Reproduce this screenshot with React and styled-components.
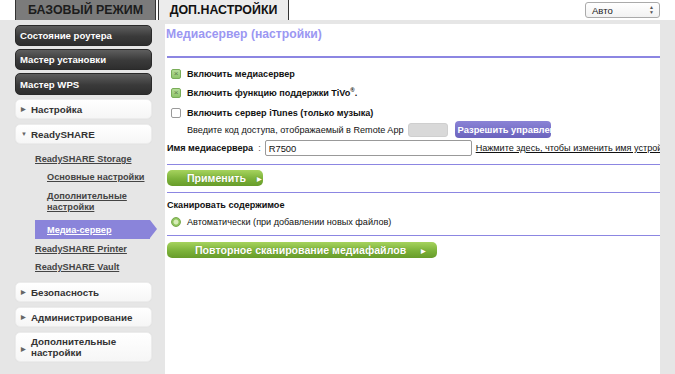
import React from "react";
import styled, { createGlobalStyle } from "styled-components";

const Global = createGlobalStyle`
  html, body { margin: 0; padding: 0; background: #fff; }
  body { font-family: "Liberation Sans", Arial, sans-serif; }
  #root { width: 675px; height: 374px; overflow: hidden; }
`;

const Page = styled.div`
  width: 675px;
  height: 374px;
  display: flex;
  flex-direction: column;
  overflow: hidden;
`;

const TopBar = styled.div`
  height: 20px;
  display: flex;
  align-items: stretch;
  padding-left: 15px;
  background: #fff;
`;

const Tab = styled.div`
  height: 20px;
  box-sizing: border-box;
  display: flex;
  align-items: center;
  justify-content: center;
  width: ${(p) => p.$w}px;
  margin-right: ${(p) => p.$mr || 0}px;
  background: ${(p) => (p.$active ? "#ececec" : "#7b7b7b")};
  color: ${(p) => (p.$active ? "#111" : "#1c1c1c")};
  border: 1px solid #333;
  border-top: none;
  border-bottom: none;
  font-weight: bold;
  font-size: 12.4px;
`;

const Select = styled.div`
  margin-left: auto;
  margin-right: 15px;
  margin-top: 2px;
  width: 75px;
  height: 16px;
  box-sizing: border-box;
  border: 1px solid #aaa;
  border-radius: 3px;
  background: linear-gradient(#fff, #f2f2f2);
  display: flex;
  align-items: center;
  justify-content: space-between;
  padding: 0 5px 0 6px;
  font-size: 9.5px;
  color: #222;
`;

const Arrows = styled.span`
  display: flex;
  flex-direction: column;
  align-items: center;
  font-size: 5px;
  line-height: 5px;
  color: #555;
`;

const Body = styled.div`
  flex: 1;
  background: #e6e6e6;
  display: flex;
  padding-top: 4px;
  padding-left: 15px;
  min-height: 0;
`;

const Sidebar = styled.div`
  width: 137px;
  display: flex;
  flex-direction: column;
  padding-top: 1px;
`;

const DarkBtn = styled.div`
  height: ${(p) => p.$h}px;
  box-sizing: border-box;
  margin-bottom: ${(p) => p.$mb}px;
  border-radius: 5px;
  background: linear-gradient(#5e5e5e, #3a3a3a 55%, #2e2e2e);
  border: 1px solid #2a2a2a;
  color: #fff;
  font-weight: bold;
  font-size: 9.6px;
  display: flex;
  align-items: center;
  padding-left: 4px;
`;

const LightBtn = styled.div`
  height: ${(p) => p.$h || 20}px;
  box-sizing: border-box;
  margin-bottom: ${(p) => p.$mb || 0}px;
  border-radius: 5px;
  background: linear-gradient(#fff, #f6f6f6);
  border: 1px solid #ececec;
  box-shadow: 0 0 1px rgba(0,0,0,0.08);
  color: #333;
  font-weight: bold;
  font-size: 9.8px;
  line-height: 11px;
  display: flex;
  align-items: center;
  padding-left: 5px;
`;

const Tri = styled.span`
  font-size: 6px;
  color: #666;
  width: 10px;
  flex-shrink: 0;
  margin-top: ${(p) => p.$mt || 0}px;
`;

const SubList = styled.div`
  display: flex;
  flex-direction: column;
  padding-top: 10px;
  padding-bottom: 9px;
`;

const SubLink = styled.a`
  display: block;
  color: #444;
  font-weight: bold;
  font-size: 9.2px;
  line-height: 11px;
  text-decoration: underline;
  padding-left: ${(p) => p.$indent}px;
  margin-bottom: ${(p) => p.$mb}px;
  width: ${(p) => p.$w || "auto"};
`;

const ActiveLink = styled.div`
  position: relative;
  margin-left: 20px;
  width: 115px;
  height: 19px;
  background: #8a84da;
  display: flex;
  align-items: center;
  padding-left: 12px;
  box-sizing: border-box;
  margin-bottom: 5px;
  color: #fff;
  font-weight: bold;
  font-size: 9.2px;
  text-decoration: underline;
  &::after {
    content: "";
    position: absolute;
    right: -7px;
    top: 0;
    border-left: 7px solid #8a84da;
    border-top: 9.5px solid transparent;
    border-bottom: 9.5px solid transparent;
  }
`;

const Main = styled.div`
  margin-left: 13px;
  width: 495px;
  background: #fff;
  overflow: hidden;
  display: flex;
  flex-direction: column;
  padding-left: 2px;
  box-sizing: border-box;
`;

const Title = styled.div`
  color: #9b97f2;
  font-weight: bold;
  font-size: 12.2px;
  margin-top: 3px;
  height: 15px;
  line-height: 15px;
  margin-left: -1px;
`;

const Rule = styled.div`
  flex-shrink: 0;
  height: ${(p) => p.$t || 1}px;
  background: #8c86e2;
  margin-top: ${(p) => p.$mt}px;
`;

const Row = styled.div`
  display: flex;
  align-items: center;
  flex-shrink: 0;
  height: ${(p) => p.$h || 14}px;
  margin-top: ${(p) => p.$mt}px;
  padding-left: ${(p) => p.$pl || 0}px;
  white-space: nowrap;
  font-size: 9.1px;
  color: #111;
  & > * { flex-shrink: 0; }
`;

const Box = styled.span`
  width: 10px;
  height: 10px;
  box-sizing: border-box;
  margin-left: 4px;
  margin-right: 6px;
  border-radius: 2px;
  display: flex;
  align-items: center;
  justify-content: center;
  font-size: 8px;
  line-height: 8px;
  ${(p) =>
    p.$checked
      ? "background: linear-gradient(#b5dc98, #8fc56b); border: 1px solid #79ad58; color: #5d7d48;"
      : "background: #fff; border: 1px solid #9a9a9a;"}
`;

const Radio = styled.span`
  width: 10px;
  height: 10px;
  border-radius: 50%;
  box-sizing: border-box;
  margin-left: 4px;
  margin-right: 6px;
  background: radial-gradient(circle, #d7ecb8 0 2px, #8fc45e 3px);
  border: 1px solid #7aa94f;
`;

const Bold = styled.span`
  font-weight: bold;
  font-size: 9.1px;
`;

const Sup = styled.sup`
  font-size: 6px;
  line-height: 0;
`;

const GreyInput = styled.span`
  display: inline-block;
  width: 40px;
  height: 14px;
  background: #d9d9d9;
  border: 1px solid #cfcfcf;
  border-radius: 3px;
  margin-left: 4px;
  box-sizing: border-box;
`;

const PurpleBtn = styled.span`
  display: inline-flex;
  align-items: center;
  height: 17px;
  width: 96px;
  overflow: hidden;
  margin-left: 7px;
  border-radius: 4px;
  background: linear-gradient(#8a83d6, #6b63bd);
  color: #fff;
  font-weight: bold;
  font-size: 9.4px;
  padding-left: 3px;
  box-sizing: border-box;
`;

const TextInput = styled.span`
  display: inline-flex;
  align-items: center;
  width: 207px;
  height: 16px;
  box-sizing: border-box;
  border: 1px solid #999;
  border-radius: 2px;
  padding-left: 3px;
  font-size: 9.4px;
  margin-left: 4px;
  color: #111;
`;

const Colon = styled.span`
  margin-left: 5px;
  color: #555;
`;

const Link = styled.a`
  margin-left: 4px;
  color: #111;
  text-decoration: underline;
  font-size: 9.1px;
`;

const GreenBtn = styled.div`
  flex-shrink: 0;
  width: ${(p) => p.$w}px;
  height: 16px;
  box-sizing: border-box;
  margin-top: ${(p) => p.$mt}px;
  border-radius: 5px;
  background: linear-gradient(#a6d35e, #7cb23a 55%, #679c2a);
  color: #fff;
  font-weight: bold;
  font-size: 10.6px;
  display: flex;
  align-items: center;
  padding-left: ${(p) => p.$pl}px;
  gap: ${(p) => p.$gap}px;
  text-shadow: 0 0 1px rgba(60, 90, 20, 0.5);
`;

const SmallTri = styled.span`
  font-size: 6px;
`;

export default function App() {
  return (
    <Page>
      <Global />
      <TopBar>
        <Tab $w={141} $mr={2}>БАЗОВЫЙ РЕЖИМ</Tab>
        <Tab $w={131} $active>ДОП.НАСТРОЙКИ</Tab>
        <Select>
          <span>Авто</span>
          <Arrows>
            <span>▲</span>
            <span>▼</span>
          </Arrows>
        </Select>
      </TopBar>
      <Body>
        <Sidebar>
          <DarkBtn $h={21} $mb={3}>Состояние роутера</DarkBtn>
          <DarkBtn $h={21} $mb={3}>Мастер установки</DarkBtn>
          <DarkBtn $h={22} $mb={4}>Мастер WPS</DarkBtn>
          <LightBtn $mb={5}>
            <Tri>▶</Tri>Настройка
          </LightBtn>
          <LightBtn>
            <Tri>▼</Tri>ReadySHARE
          </LightBtn>
          <SubList>
            <SubLink $indent={20} $mb={7}>ReadySHARE Storage</SubLink>
            <SubLink $indent={32} $mb={8}>Основные настройки</SubLink>
            <SubLink $indent={32} $mb={7} $w="90px">
              Дополнительные настройки
            </SubLink>
            <ActiveLink>Медиа-сервер</ActiveLink>
            <SubLink $indent={20} $mb={7}>ReadySHARE Printer</SubLink>
            <SubLink $indent={20} $mb={0}>ReadySHARE Vault</SubLink>
          </SubList>
          <LightBtn $mb={5}>
            <Tri>▶</Tri>Безопасность
          </LightBtn>
          <LightBtn $mb={5}>
            <Tri>▶</Tri>Администрирование
          </LightBtn>
          <LightBtn $h={30}>
            <Tri $mt={4}>▶</Tri>
            <span>
              Дополнительные
              <br />
              настройки
            </span>
          </LightBtn>
        </Sidebar>
        <Main>
          <Title>Медиасервер (настройки)</Title>
          <Rule $t={2} $mt={14} />
          <Row $mt={9}>
            <Box $checked>×</Box>
            <Bold>Включить медиасервер</Bold>
          </Row>
          <Row $mt={5}>
            <Box $checked>×</Box>
            <Bold>
              Включить функцию поддержки TiVo<Sup>®</Sup>.
            </Bold>
          </Row>
          <Row $mt={6}>
            <Box />
            <Bold>Включить сервер iTunes (только музыка)</Bold>
          </Row>
          <Row $mt={1} $h={17} $pl={20}>
            Введите код доступа, отображаемый в Remote App
            <GreyInput />
            <PurpleBtn>Разрешить управление</PurpleBtn>
          </Row>
          <Row $mt={2} $h={16}>
            <Bold>Имя медиасервера</Bold>
            <Colon>:</Colon>
            <TextInput>R7500</TextInput>
            <Link>Нажмите здесь, чтобы изменить имя устройства</Link>
          </Row>
          <Rule $mt={8} />
          <GreenBtn $w={96} $mt={5} $pl={20} $gap={11}>
            Применить <SmallTri>▶</SmallTri>
          </GreenBtn>
          <Rule $mt={6} />
          <Row $mt={5}>
            <Bold>Сканировать содержимое</Bold>
          </Row>
          <Row $mt={3}>
            <Radio />
            Автоматически (при добавлении новых файлов)
          </Row>
          <Rule $mt={6} />
          <GreenBtn $w={270} $mt={6} $pl={28} $gap={15}>
            Повторное сканирование медиафайлов <SmallTri>▶</SmallTri>
          </GreenBtn>
        </Main>
      </Body>
    </Page>
  );
}
